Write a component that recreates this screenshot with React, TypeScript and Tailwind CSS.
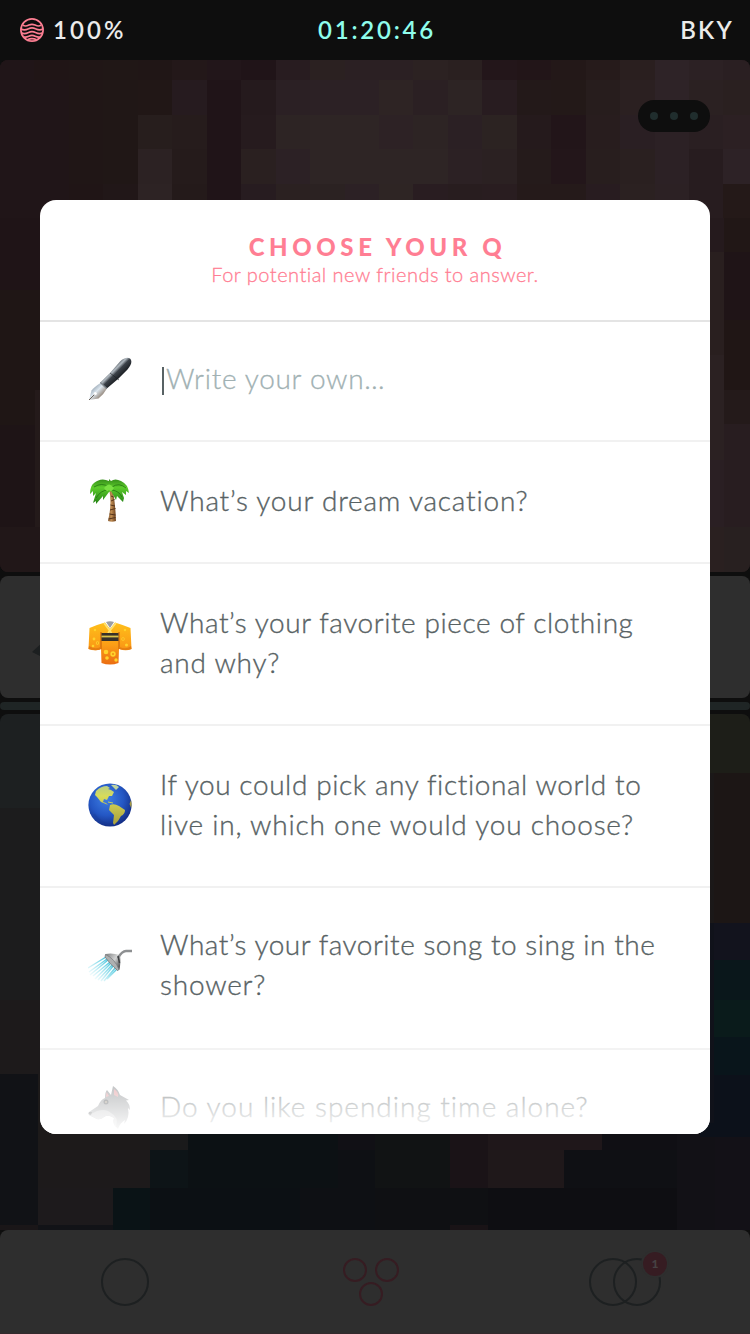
import type { ReactNode } from 'react';

type Tile = [x: number, y: number, w: number, h: number, fill: string];

const CELL = 34.45;

const portraitRows: { y: number; h: number; colors: string[] }[] = [
  {
    y: 0, h: 20,
    colors: ['#201518', '#201516', '#201616', '#201716', '#201616', '#231819', '#22161a', '#201418', '#281c20', '#2b2121', '#2b2023', '#2b2023', '#2c2222', '#2a2020', '#23161a', '#221518', '#231818', '#261b1b', '#2a1f1f', '#2e2327', '#2c2124', '#2a1f22'],
  },
  {
    y: 20, h: 34.5,
    colors: ['#201518', '#201518', '#201616', '#201716', '#211716', '#261b1f', '#201418', '#251a1d', '#2b2024', '#2c2125', '#2c2125', '#2e2424', '#2b2023', '#2d2424', '#281c20', '#231919', '#231918', '#271d1d', '#2b2021', '#2e2327', '#2b2122', '#2a2020'],
  },
  {
    y: 54.5, h: 34.5,
    colors: ['#201518', '#201518', '#201616', '#201716', '#271e1d', '#261c1c', '#201418', '#261b1e', '#2d2424', '#2e2525', '#2e2525', '#2d2225', '#2d2424', '#2b2024', '#2c2322', '#251a1c', '#221519', '#281d1e', '#2a1f23', '#2c2125', '#2a1f22', '#2c2023'],
  },
  {
    y: 89, h: 34.5,
    colors: ['#201518', '#201518', '#201616', '#201716', '#2c2223', '#251b1b', '#201418', '#2a2020', '#2c2125', '#2e2525', '#2e2525', '#2e2525', '#2e2525', '#2c2124', '#2b2122', '#251b1b', '#23161a', '#281e1e', '#2a2020', '#2c2125', '#271c1f', '#2d2226'],
  },
  {
    y: 123.5, h: 34.5,
    colors: ['#201518', '#201518', '#201516', '#211718', '#2d2324', '#241a1a', '#201418', '#271c20', '#2b2121', '#2b2222', '#2c2125', '#2e2524', '#291d21', '#281d1f', '#291d20', '#251a1a', '#251a1a', '#281c20', '#2b2121', '#2c2124', '#271c1f', '#241918'],
  },
];

const portraitEdges: Tile[] = [
  [0, 158, 40, 72, '#1f1417'],
  [0, 230, 40, 135, '#1f1615'],
  [0, 365, 40, 102, '#1e1416'],
  [0, 467, 40, 45, '#211718'],
  [34.5, 330, 10, 137, '#241a1a'],
  [700, 158, 24, 34, '#251a1d'],
  [700, 192, 24, 103, '#291f1f'],
  [700, 295, 24, 105, '#2b2122'],
  [700, 400, 24, 67, '#2a1f23'],
  [700, 467, 24, 45, '#2a2020'],
  [723.5, 158, 27, 34, '#211716'],
  [723.5, 192, 27, 68, '#1f1417'],
  [723.5, 260, 27, 70, '#201615'],
  [723.5, 330, 27, 34, '#241a1a'],
  [723.5, 364, 27, 103, '#281d20'],
  [723.5, 467, 27, 45, '#282020'],
];

const cityTiles: Tile[] = [
  [0, 0, 60, 94, '#1d2021'],
  [0, 94, 60, 192, '#1c1c1d'],
  [0, 286, 60, 75, '#1d1a1b'],
  [0, 360, 37.5, 151, '#111216'],
  [37.5, 360, 150.5, 76, '#1d1a1a'],
  [150, 398, 38, 38, '#1a1a1b'],
  [37.5, 436, 112.5, 38, '#1d1a1b'],
  [37.5, 474, 75, 37, '#1d1a1c'],
  [188, 398, 150, 76, '#0c1114'],
  [150, 436, 38, 38, '#0d1417'],
  [112.5, 474, 37.5, 42, '#0a1316'],
  [150, 474, 150, 42, '#0c1014'],
  [0, 511, 37.5, 5, '#1a1618'],
  [37.5, 511, 75, 5, '#121317'],
  [338, 398, 37, 38, '#111015'],
  [375, 398, 75, 76, '#111314'],
  [450, 398, 38, 76, '#1a1317'],
  [488, 398, 114, 38, '#1f171a'],
  [488, 436, 76, 38, '#1f181a'],
  [602, 398, 75, 38, '#100f14'],
  [564, 436, 113, 38, '#0f1014'],
  [375, 474, 113, 42, '#0f1013'],
  [450, 511, 38, 5, '#191316'],
  [488, 474, 190, 42, '#0e0e12'],
  [677, 398, 38, 118, '#121116'],
  [715, 400, 35, 116, '#131117'],
  [700, 0, 50, 59, '#1d1e18'],
  [700, 59, 50, 150, '#1c1615'],
  [700, 59, 14, 150, '#1b1818'],
  [700, 209, 50, 37, '#12131d'],
  [700, 246, 50, 40, '#0a171b'],
  [700, 286, 50, 37, '#0a1b1b'],
  [700, 323, 50, 38, '#09151b'],
  [700, 361, 50, 62, '#0c111a'],
  [700, 209, 14, 200, '#10121a'],
];

function Tiles({ tiles }: { tiles: Tile[] }) {
  return (
    <>
      {tiles.map(([x, y, w, h, fill], i) => (
        <rect key={i} x={x} y={y} width={w} height={h} fill={fill} />
      ))}
    </>
  );
}

function Pen() {
  return (
    <svg viewBox="0 0 44 44" className="size-11">
      <defs>
        <linearGradient id="penBody" x1="22" y1="12" x2="32" y2="22" gradientUnits="userSpaceOnUse">
          <stop offset="0" stopColor="#3d444b" />
          <stop offset=".28" stopColor="#b3bbc2" />
          <stop offset=".5" stopColor="#3b4148" />
          <stop offset="1" stopColor="#15181c" />
        </linearGradient>
        <linearGradient id="penNib" x1="4" y1="30" x2="14" y2="40" gradientUnits="userSpaceOnUse">
          <stop offset="0" stopColor="#8f9eac" />
          <stop offset=".45" stopColor="#dce6ee" />
          <stop offset="1" stopColor="#8b7b6c" />
        </linearGradient>
      </defs>
      <path d="M1 43 3.500 33.500Q6 30 12.500 26L19 31.500Q16 37 10.500 41.500Z" fill="url(#penNib)" />
      <path d="M1 43 7 37" stroke="#6d6258" strokeWidth="1" />
      <circle cx="7.300" cy="36.500" r="1.500" fill="#fff" />
      <path d="M12 25.800 22 16 32 4.500C36 .5 40 0 42 1.500 44.500 4 43.500 8 39.500 12.500L30 22 18.500 31.800Z" fill="url(#penBody)" />
      <path d="M22 16 31 23" stroke="#1b1e22" strokeWidth="1" opacity=".6" />
      <path d="M12.300 25.500 18.800 31.500" stroke="#7f868c" strokeWidth="1.200" />
    </svg>
  );
}

function Palm() {
  return (
    <svg viewBox="0 0 44 44" className="mb-1 size-11">
      <defs>
        <linearGradient id="trunk" x1="18" x2="27" y1="0" y2="0" gradientUnits="userSpaceOnUse">
          <stop offset="0" stopColor="#6f4624" />
          <stop offset=".6" stopColor="#bd8a50" />
          <stop offset="1" stopColor="#7d5029" />
        </linearGradient>
        <linearGradient id="leaf" x1="0" x2="0" y1="0" y2="24" gradientUnits="userSpaceOnUse">
          <stop offset="0" stopColor="#2f8417" />
          <stop offset=".4" stopColor="#5dcc2c" />
          <stop offset="1" stopColor="#2a8a18" />
        </linearGradient>
      </defs>
      <path d="M21.500 13Q24 27 20 43Q24 44.500 28 43Q27.500 27 25 13Z" fill="url(#trunk)" />
      <path d="M23 18 25.500 19M23 23 26.500 21.500M22.500 27 27 28M22 32 27.500 30.500M21.500 36 27.500 37M20.500 41 27.500 39.500" stroke="#56351b" strokeWidth="1" />
      <path d="M21 3Q13-1 6 5Q2 8 2 16L5 13 5 18 8 15 5 25 8 23 8 26 15 18 15 22 21 14 23 13 28 22 29 18 35 24 36 20 37 23 34 14 38 17 38 13 41 15Q40 6 33 3Q27 0 23 3L21 1Z" fill="url(#leaf)" />
      <path d="M21 9Q14 4 6 9M20 12Q13 12 8 20M24 9Q31 4 38 10M24 12Q31 13 34 19" stroke="#237412" strokeWidth="1" fill="none" opacity=".8" />
      <path d="M16 10Q21 3 26 10 23 15 21 12 19 15 16 10Z" fill="#79df42" />
    </svg>
  );
}

function Kimono() {
  return (
    <svg viewBox="0 0 44 44" className="mb-0.5 size-11">
      <defs>
        <linearGradient id="robe" x1="0" x2="0" y1="0" y2="44" gradientUnits="userSpaceOnUse">
          <stop offset="0" stopColor="#ffc21a" />
          <stop offset=".55" stopColor="#fb9d16" />
          <stop offset="1" stopColor="#ea6b12" />
        </linearGradient>
      </defs>
      <path d="M18 1 22 7 26 1Q22-.5 18 1Z" fill="#9b9ea2" />
      <path d="M17 1.500Q8 4 1.500 7L.5 28Q7 30.500 13 28L13.500 42Q22 45 30.500 42L31 28Q38 30.500 43.500 28L42.500 7Q35 4 27 1.500L22 8Z" fill="url(#robe)" />
      <path d="M13 28V11M31 28V11" stroke="#d26b0d" strokeWidth="1.300" />
      <path d="M1 25Q7 29 12.500 26V28.500Q7 30 .5 28ZM31.500 26Q38 29 43 25L43.500 28Q38 30 31.500 28Z" fill="#e57e12" />
      <path d="M16 2 23.500 12M28 2 20 12" stroke="#ffe16a" strokeWidth="1.800" fill="none" />
      <rect x="13.500" y="12" width="17" height="8" fill="#37312a" />
      <path d="M13.500 15.500h17" stroke="#dac24a" strokeWidth="1.800" />
      <g fill="#ffd22c">
        <circle cx="6" cy="18" r="1.400" /><circle cx="9.500" cy="22" r="1.700" /><circle cx="5" cy="25" r="1.300" />
        <circle cx="35" cy="18" r="1.700" /><circle cx="38.500" cy="24" r="1.500" /><circle cx="7" cy="9" r="1.200" /><circle cx="37" cy="9" r="1.200" />
        <circle cx="18" cy="31" r="2.300" /><circle cx="25" cy="33" r="2.700" /><circle cx="19" cy="37" r="1.800" /><circle cx="28" cy="39" r="1.700" />
      </g>
      <g fill="#f08c14"><circle cx="25" cy="33" r="1" /><circle cx="35" cy="18" r=".8" /><circle cx="9.500" cy="22" r=".8" /></g>
    </svg>
  );
}

function Globe() {
  return (
    <svg viewBox="0 0 44 44" className="mb-0.5 size-11">
      <defs>
        <radialGradient id="sea" cx=".42" cy=".35" r=".65">
          <stop offset="0" stopColor="#3f7fe4" />
          <stop offset=".6" stopColor="#2457c4" />
          <stop offset="1" stopColor="#142f86" />
        </radialGradient>
        <linearGradient id="land" x1="0" x2="0" y1="0" y2="44" gradientUnits="userSpaceOnUse">
          <stop offset="0" stopColor="#aec98f" />
          <stop offset=".3" stopColor="#d8dc5a" />
          <stop offset="1" stopColor="#a59a3a" />
        </linearGradient>
      </defs>
      <circle cx="22" cy="22" r="21.600" fill="url(#sea)" />
      <path d="M8 8Q13 3 19 3L22 5 20 6 23 7 26 9 24 13 21 13 19 17 16 16 15 19 18 20 20 22 18 21 13 19 9 14 7 12Z" fill="url(#land)" />
      <path d="M23 2Q28 1 31 4L28 7 25 4Z" fill="#bdd3a0" />
      <path d="M22 22Q26 20 31 23L37 27Q37 31 33 33L30 38 26 42 25 40 26 32 21 27Z" fill="url(#land)" />
      <path d="M43 17Q44 20 43.200 25L41.500 21Z" fill="#a99a3e" />
      <path d="M20 19 25 20" stroke="#b9cf6a" strokeWidth="1" />
      <path d="M6 31Q13 42 26 42" stroke="#16398f" strokeWidth="2" fill="none" opacity=".25" />
    </svg>
  );
}

function Shower() {
  return (
    <svg viewBox="0 0 44 44" className="size-11">
      <defs>
        <linearGradient id="spray" x1="25" y1="18" x2="8" y2="36" gradientUnits="userSpaceOnUse">
          <stop offset="0" stopColor="#31bdd8" />
          <stop offset="1" stopColor="#8fe1ee" stopOpacity=".15" />
        </linearGradient>
        <linearGradient id="steel" x1="20" y1="10" x2="34" y2="20" gradientUnits="userSpaceOnUse">
          <stop offset="0" stopColor="#8d8f90" />
          <stop offset=".5" stopColor="#d2d3d3" />
          <stop offset="1" stopColor="#4c4e50" />
        </linearGradient>
      </defs>
      <path d="M18 13 0 24M19 15 1 28M20 16 2 31M22 18 5 32M23 19 7 35M25 20 10 36M26 21 13 37M28 23 16 37M30 24 19 35" stroke="url(#spray)" strokeWidth="1.400" fill="none" />
      <path d="M17.500 10Q24 8.500 32 11Q33 17 31.500 25.500L29.500 26.500Q22 20 17 13Z" fill="url(#steel)" />
      <path d="M17.500 10.500Q27 15 31 25.500L29.500 26.500Q22 20 17 13Z" fill="#aeb0b1" stroke="#77797b" strokeWidth=".7" />
      <path d="M30 14Q34 7 38 7H44" stroke="#8d8f91" strokeWidth="2.500" fill="none" />
      <path d="M30 12 31.500 19" stroke="#3f4143" strokeWidth="1.500" />
    </svg>
  );
}

function Wolf() {
  return (
    <svg viewBox="0 0 44 44" className="size-11">
      <path d="M17 12Q17 6 19 4L23 9 25 0Q30 3 32 9L41 14 38 14.500Q42 18 42 24L40 22Q42 32 36 38L37 34Q32 37 30 43Q24 38 26 32Q20 28 16 31Q11 35 7 32L1 29Q0 27 1 26L10 20Q13 13 17 12Z" fill="#85888b" />
      <path d="M1 29 9 25Q18 22 23 27Q31 31 28 41Q24 38 26 32Q20 28 16 31Q11 35 7 32Z" fill="#b5b6b8" />
      <path d="M26 3Q31 6 30 11L26 9ZM18.500 6 21 10 18 11Z" fill="#dd8f93" />
      <circle cx="18" cy="16" r="2.500" fill="#34373a" />
      <circle cx="18" cy="16" r="1" fill="#9a8d72" />
      <path d="M1 26 4 26 3 29 .5 28Z" fill="#2b2c2f" />
    </svg>
  );
}

function Question({ icon, lines, className }: { icon: ReactNode; lines: [string, string][]; className: string }) {
  return (
    <li className={`flex shrink-0 items-center gap-7 border-b-2 border-[#f1f1f1] pl-12 ${className}`}>
      {icon}
      <p className="pb-1 text-[28px] leading-10 font-light whitespace-nowrap text-[#586264] [-webkit-text-stroke:0.35px_#586264]">
        {lines.map(([text, tracking]) => (
          <span key={text} className={`block ${tracking}`}>{text}</span>
        ))}
      </p>
    </li>
  );
}

function StatusBar() {
  return (
    <header className="grid h-15 shrink-0 grid-cols-3 items-center pr-4 pl-5 text-2xl font-semibold text-[#ebebeb]">
      <div className="flex items-center gap-2">
        <svg viewBox="0 0 24 24" className="size-6" fill="none" stroke="#fc7e92" strokeWidth="1.700">
          <circle cx="12" cy="12" r="11.100" />
          <path d="M3 7.300C5.500 8.800 7 8 9 7Q12 5.700 15 7C17 8 18.500 8.800 21 7.300M1.200 11C4 12.800 6 12 8.500 10.800Q12 9 15.500 10.800C18 12 20 12.800 22.800 11M1.200 14.800C4 16.600 6 15.800 8.500 14.600Q12 12.800 15.500 14.600C18 15.800 20 16.600 22.800 14.800M3.500 18.800C5.500 19.600 7 19 8.800 18.200Q12 16.700 15.200 18.200C17 19 18.500 19.600 20.500 18.800M7.500 21.800Q12 19.500 16.500 21.800" />
        </svg>
        <span className="pl-px tracking-[3.1px]">100%</span>
      </div>
      <span className="text-center tracking-[2.8px] text-[#8ffdec]">01:20:46</span>
      <span className="text-right tracking-[2.2px]">BKY</span>
    </header>
  );
}

function Navigation() {
  return (
    <nav className="flex h-26 shrink-0 rounded-t-lg border-b border-[#33292c] bg-[#2e2e2e]">
      <svg viewBox="0 0 750 104" className="h-26 w-full" fill="none" strokeWidth="2">
        <circle cx="125" cy="52" r="23" stroke="#1d2021" />
        <g stroke="#361c22">
          <circle cx="355" cy="40" r="11" />
          <circle cx="387" cy="40" r="11" />
          <circle cx="371" cy="64" r="11" />
        </g>
        <g stroke="#1d2021">
          <circle cx="613" cy="52" r="23" />
          <circle cx="637" cy="52" r="23" />
        </g>
        <circle cx="655" cy="34" r="14" fill="#2e2e2e" />
        <circle cx="655" cy="34" r="12" fill="#361c22" />
        <text x="655" y="38" textAnchor="middle" fontSize="12" className="font-black" fill="#464243">1</text>
      </svg>
    </nav>
  );
}

export default function App() {
  return (
    <div className="relative flex h-[1334px] w-[750px] flex-col overflow-hidden bg-[#0e0e0e] font-['Lato',sans-serif]">
      <StatusBar />
      <main className="flex min-h-0 flex-1 flex-col gap-1">
        <section className="relative h-[512px] shrink-0 overflow-hidden rounded-lg bg-[#251a1c]">
          <svg viewBox="0 0 750 512" className="h-full w-full" shapeRendering="crispEdges">
            {portraitRows.map((row) =>
              row.colors.map((fill, i) => (
                <rect key={`${row.y}-${i}`} x={i * CELL} y={row.y} width={CELL + 0.5} height={row.h} fill={fill} />
              )),
            )}
            <Tiles tiles={portraitEdges} />
          </svg>
          <div className="absolute top-10 right-10 flex h-8 w-18 items-center justify-center gap-3 rounded-full bg-[#0e0e0e]">
            <span className="size-2 rounded-full bg-[#202d2d]" />
            <span className="size-2 rounded-full bg-[#202d2d]" />
            <span className="size-2 rounded-full bg-[#202d2d]" />
          </div>
        </section>
        <section className="flex h-[122px] shrink-0 items-center rounded-lg bg-[#2e2e2e] pl-8">
          <svg viewBox="0 0 16 30" className="mt-7 h-[30px] w-4">
            <path d="M0 16 12 5V22Z" fill="#1c1f20" />
          </svg>
        </section>
        <div className="h-2 shrink-0 rounded-full bg-[#1f2525]" />
        <section className="h-[516px] shrink-0 overflow-hidden rounded-t-lg bg-[#0e1014]">
          <svg viewBox="0 0 750 516" className="h-full w-full" shapeRendering="crispEdges">
            <Tiles tiles={cityTiles} />
          </svg>
        </section>
      </main>
      <Navigation />

      <div role="dialog" className="absolute top-50 left-10 flex h-[934px] w-[670px] flex-col overflow-hidden rounded-2xl bg-white">
        <div className="flex h-[122px] shrink-0 flex-col items-center border-b-2 border-[#e4e4e4] pt-[33px] text-[#ff7e93]">
          <h1 className="pl-[5px] text-2xl leading-7 font-black tracking-[4.6px]">CHOOSE YOUR Q</h1>
          <p className="-mt-px text-xl leading-7 font-light tracking-[0.48px] [-webkit-text-stroke:0.3px_#ff7e93]">
            For potential new friends to answer.
          </p>
        </div>
        <ul className="flex flex-col">
          <li className="flex h-30 shrink-0 items-center gap-7 border-b-2 border-[#f1f1f1] pb-1 pl-12">
            <Pen />
            <div className="flex items-center gap-0.5 pl-0.5">
              <span className="mt-1 h-7 w-0.5 bg-[#586264]" />
              <span className="pb-[3px] text-[28px] leading-10 font-light tracking-[0.7px] text-[#a1b1b3] [-webkit-text-stroke:0.3px_#a1b1b3]">
                Write your own…
              </span>
            </div>
          </li>
          <Question className="h-[122px]" icon={<Palm />} lines={[['What’s your dream vacation?', 'tracking-[0.8px]']]} />
          <Question
            className="h-[162px]"
            icon={<Kimono />}
            lines={[['What’s your favorite piece of clothing', 'tracking-[0.58px]'], ['and why?', 'tracking-[0.75px]']]}
          />
          <Question
            className="h-[162px]"
            icon={<Globe />}
            lines={[['If you could pick any fictional world to', 'tracking-[0.6px]'], ['live in, which one would you choose?', 'tracking-[0.78px]']]}
          />
          <Question
            className="h-[162px] pb-1"
            icon={<Shower />}
            lines={[['What’s your favorite song to sing in the', 'tracking-[0.53px]'], ['shower?', 'tracking-[0.8px]']]}
          />
          <Question className="h-[122px] pb-1" icon={<Wolf />} lines={[['Do you like spending time alone?', 'tracking-[1px]']]} />
        </ul>
        <div className="pointer-events-none absolute inset-x-0 bottom-0 h-25 bg-linear-to-b from-white/0 to-white" />
      </div>
    </div>
  );
}
